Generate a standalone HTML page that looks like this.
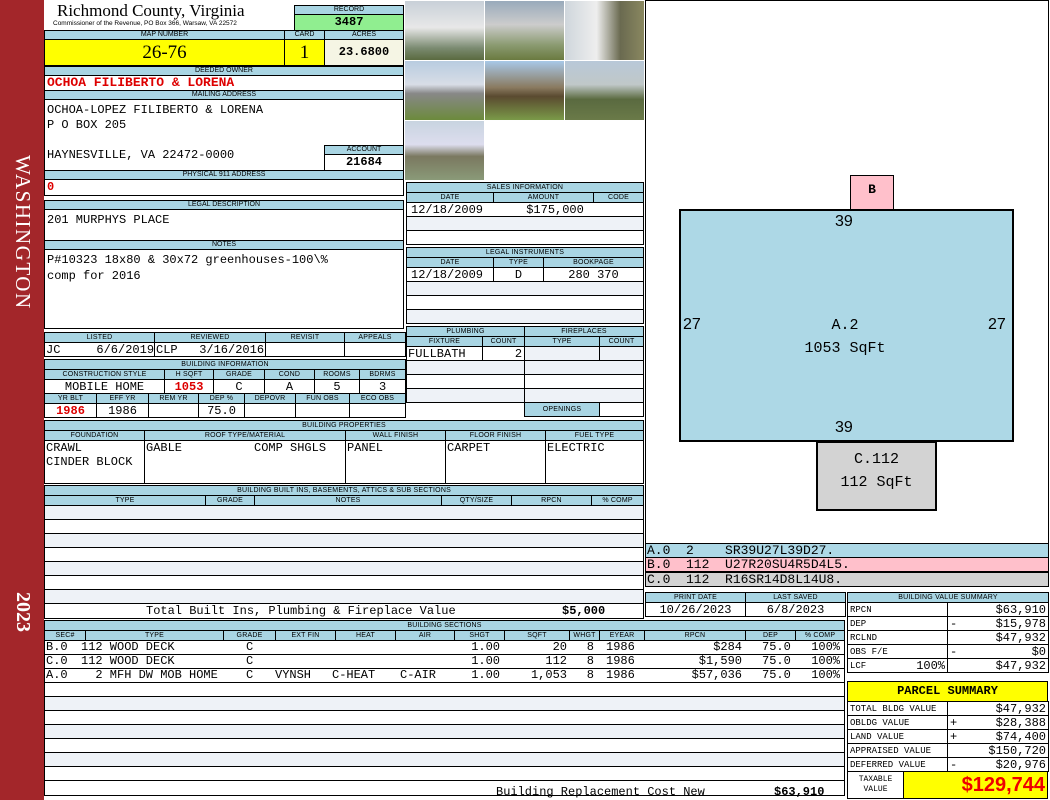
<!DOCTYPE html>
<html><head><meta charset="utf-8">
<style>
*{margin:0;padding:0;box-sizing:border-box}
body{width:1050px;height:800px;background:#fff;position:relative;overflow:hidden;font-family:"Liberation Mono",monospace;font-size:12px;color:#000}
.a{position:absolute;white-space:pre;line-height:13px}
.bx{position:absolute;border:1px solid #000;background:#fff}
table{position:absolute;border-collapse:collapse;table-layout:fixed}
td{border:1px solid #000;white-space:nowrap;overflow:hidden;padding:0 2px;font-size:12px;line-height:12px;height:14px}
td.h,.h{background:#a9d5e3;font-family:"Liberation Sans",sans-serif;font-size:7px;text-align:center;height:10px;line-height:9px;letter-spacing:0.2px;padding:0}
.hb{position:absolute;background:#a9d5e3;border:1px solid #000;font-family:"Liberation Sans",sans-serif;font-size:7px;text-align:center;line-height:8px;height:10px}
.r{color:#d00;font-weight:bold}
.c{text-align:center}.rt{text-align:right}
.g{background:#eef2f7}
.ph{position:absolute;width:79px;height:59px}
</style></head><body>
<div class="a" style="left:0;top:0;width:44px;height:800px;background:#a3262a"></div>
<div class="a" style="left:8px;top:155px;width:30px;height:175px;color:#fff;font-family:'Liberation Serif',serif;font-size:21px;line-height:30px;writing-mode:vertical-rl;letter-spacing:1.5px">WASHINGTON</div>
<div class="a" style="left:10px;top:592px;color:#fff;font-family:'Liberation Serif',serif;font-size:20px;line-height:26px;writing-mode:vertical-rl;font-weight:bold">2023</div>

<div class="a" style="left:57px;top:2px;font-family:'Liberation Serif',serif;font-size:17px;line-height:18px">Richmond County, Virginia</div>
<div class="a" style="left:53px;top:20px;font-family:'Liberation Sans',sans-serif;font-size:6.5px;line-height:8px">Commissioner of the Revenue, PO Box 366, Warsaw, VA 22572</div>
<div class="hb" style="left:294px;top:5px;width:110px">RECORD</div>
<div class="bx" style="left:294px;top:14px;width:110px;height:17px;background:#90ee90;text-align:center;font-weight:bold;font-size:12px;line-height:15px">3487</div>

<div class="hb" style="left:44px;top:30px;width:241px">MAP NUMBER</div>
<div class="hb" style="left:284px;top:30px;width:41px">CARD</div>
<div class="hb" style="left:324px;top:30px;width:80px">ACRES</div>
<div class="bx" style="left:44px;top:39px;width:241px;height:27px;background:#ffff00;font-family:'Liberation Serif',serif;font-size:19px;text-align:center;line-height:25px">26-76</div>
<div class="bx" style="left:284px;top:39px;width:41px;height:27px;background:#ffff00;font-family:'Liberation Serif',serif;font-size:19px;text-align:center;line-height:25px">1</div>
<div class="bx" style="left:324px;top:39px;width:80px;height:27px;background:#f5f5e4;font-weight:bold;font-size:12px;text-align:center;line-height:25px">23.6800</div>

<div class="hb" style="left:44px;top:66px;width:360px">DEEDED OWNER</div>
<div class="bx" style="left:44px;top:75px;width:360px;height:16px;padding-left:2px;line-height:14px"><span class="r" style="font-size:13px">OCHOA FILIBERTO &amp; LORENA</span></div>
<div class="hb" style="left:44px;top:90px;width:360px">MAILING ADDRESS</div>
<div class="bx" style="left:44px;top:99px;width:360px;height:72px;padding:3px 2px;line-height:15px">OCHOA-LOPEZ FILIBERTO &amp; LORENA<br>P O BOX 205<br><br>HAYNESVILLE, VA 22472-0000</div>
<div class="hb" style="left:324px;top:145px;width:80px">ACCOUNT</div>
<div class="bx" style="left:324px;top:154px;width:80px;height:17px;font-weight:bold;font-size:12px;text-align:center;line-height:15px">21684</div>
<div class="hb" style="left:44px;top:170px;width:360px">PHYSICAL 911 ADDRESS</div>
<div class="bx" style="left:44px;top:179px;width:360px;height:17px;padding-left:2px;line-height:15px"><span class="r">0</span></div>

<div class="hb" style="left:44px;top:200px;width:360px">LEGAL DESCRIPTION</div>
<div class="bx" style="left:44px;top:209px;width:360px;height:32px;padding:3px 2px;line-height:14px">201 MURPHYS PLACE</div>
<div class="hb" style="left:44px;top:240px;width:360px">NOTES</div>
<div class="bx" style="left:44px;top:249px;width:360px;height:80px;padding:2px 2px;line-height:16px">P#10323 18x80 &amp; 30x72 greenhouses-100\%<br>comp for 2016</div>

<table style="left:44px;top:332px;width:361px">
<col style="width:110px"><col style="width:111px"><col style="width:79px"><col style="width:61px">
<tr><td class="h">LISTED</td><td class="h">REVIEWED</td><td class="h">REVISIT</td><td class="h">APPEALS</td></tr>
<tr><td style="padding:0 1px">JC&nbsp;&nbsp;&nbsp;&nbsp;&nbsp;6/6/2019</td><td style="padding:0 1px">CLP&nbsp;&nbsp;&nbsp;3/16/2016</td><td></td><td></td></tr></table>

<table style="left:44px;top:359px;width:361px">
<col style="width:120px"><col style="width:49px"><col style="width:51px"><col style="width:50px"><col style="width:45px"><col style="width:46px">
<tr><td class="h" colspan="6">BUILDING INFORMATION</td></tr>
<tr><td class="h">CONSTRUCTION STYLE</td><td class="h">H SQFT</td><td class="h">GRADE</td><td class="h">COND</td><td class="h">ROOMS</td><td class="h">BDRMS</td></tr>
<tr><td class="c">MOBILE HOME</td><td class="c r">1053</td><td class="c">C</td><td class="c">A</td><td class="c">5</td><td class="c">3</td></tr></table>
<table style="left:44px;top:393px;width:361px">
<col style="width:52px"><col style="width:52px"><col style="width:50px"><col style="width:46px"><col style="width:51px"><col style="width:54px"><col style="width:56px">
<tr><td class="h">YR BLT</td><td class="h">EFF YR</td><td class="h">REM YR</td><td class="h">DEP %</td><td class="h">DEPOVR</td><td class="h">FUN OBS</td><td class="h">ECO OBS</td></tr>
<tr><td class="c r">1986</td><td class="c">1986</td><td></td><td class="c">75.0</td><td></td><td></td><td></td></tr></table>

<!-- photos -->
<div class="ph" style="left:405px;top:1px;background:linear-gradient(#c8d0d8 0,#e8e8e8 45%,#7a8a70 80%,#5a6a40)"></div>
<div class="ph" style="left:485px;top:1px;background:linear-gradient(#9ab 0,#ccc 40%,#8a9a70 75%,#6a7a40)"></div>
<div class="ph" style="left:565px;top:1px;background:linear-gradient(90deg,#cfd6dc,#eee 40%,#6a6a50 70%,#8a8860)"></div>
<div class="ph" style="left:405px;top:61px;background:linear-gradient(#b8cce0 0,#d8dde6 40%,#888 55%,#6c8a3c)"></div>
<div class="ph" style="left:485px;top:61px;background:linear-gradient(#a8c8e8 0,#8a7a60 45%,#5a4a30 60%,#7a9a48)"></div>
<div class="ph" style="left:565px;top:61px;background:linear-gradient(#b8c8d8 0,#c0c8c8 40%,#5a6a40 65%,#6a7a48)"></div>
<div class="ph" style="left:405px;top:121px;background:linear-gradient(#c8d4e0 0,#dde 40%,#7a7860 60%,#8a9a78)"></div>

<!-- sales -->
<table style="left:406px;top:182px;width:237px">
<col style="width:87px"><col style="width:100px"><col style="width:50px">
<tr><td class="h" colspan="3">SALES INFORMATION</td></tr>
<tr><td class="h">DATE</td><td class="h">AMOUNT</td><td class="h">CODE</td></tr>
<tr><td colspan="3" style="padding-left:4px">12/18/2009&nbsp;&nbsp;&nbsp;&nbsp;&nbsp;&nbsp;$175,000</td></tr>
<tr><td colspan="3" class="g"></td></tr><tr><td colspan="3"></td></tr></table>
<table style="left:406px;top:247px;width:237px">
<col style="width:87px"><col style="width:50px"><col style="width:100px">
<tr><td class="h" colspan="3">LEGAL INSTRUMENTS</td></tr>
<tr><td class="h">DATE</td><td class="h">TYPE</td><td class="h">BOOKPAGE</td></tr>
<tr><td style="padding-left:4px">12/18/2009</td><td class="c">D</td><td class="c">280 370</td></tr>
<tr><td colspan="3" class="g"></td></tr><tr><td colspan="3"></td></tr><tr><td colspan="3" class="g"></td></tr></table>

<table style="left:406px;top:326px;width:237px">
<col style="width:76px"><col style="width:42px"><col style="width:75px"><col style="width:44px">
<tr><td class="h" colspan="2">PLUMBING</td><td class="h" colspan="2">FIREPLACES</td></tr>
<tr><td class="h">FIXTURE</td><td class="h">COUNT</td><td class="h">TYPE</td><td class="h">COUNT</td></tr>
<tr><td style="padding:0 1px">FULLBATH</td><td class="rt">2</td><td class="g"></td><td class="g"></td></tr>
<tr><td class="g" colspan="2"></td><td class="g" colspan="2"></td></tr>
<tr><td colspan="2"></td><td colspan="2"></td></tr>
<tr><td class="g" colspan="2"></td><td class="g" colspan="2"></td></tr>
<tr><td colspan="2" style="border:none;border-right:1px solid #000"></td><td class="h" style="height:14px">OPENINGS</td><td></td></tr></table>

<!-- building properties -->
<table style="left:44px;top:420px;width:599px">
<col style="width:100px"><col style="width:201px"><col style="width:100px"><col style="width:100px"><col style="width:98px">
<tr><td class="h" colspan="5">BUILDING PROPERTIES</td></tr>
<tr><td class="h">FOUNDATION</td><td class="h">ROOF TYPE/MATERIAL</td><td class="h">WALL FINISH</td><td class="h">FLOOR FINISH</td><td class="h">FUEL TYPE</td></tr>
<tr><td style="height:43px;vertical-align:top;line-height:14px;padding:0 1px">CRAWL<br>CINDER BLOCK</td><td style="vertical-align:top;padding:0 1px;line-height:14px">GABLE&nbsp;&nbsp;&nbsp;&nbsp;&nbsp;&nbsp;&nbsp;&nbsp;&nbsp;&nbsp;COMP SHGLS</td><td style="vertical-align:top;padding:0 1px;line-height:14px">PANEL</td><td style="vertical-align:top;padding:0 1px;line-height:14px">CARPET</td><td style="vertical-align:top;padding:0 1px;line-height:14px">ELECTRIC</td></tr></table>

<table style="left:44px;top:485px;width:599px">
<col style="width:161px"><col style="width:49px"><col style="width:187px"><col style="width:70px"><col style="width:80px"><col style="width:52px">
<tr><td class="h" colspan="6">BUILDING BUILT INS, BASEMENTS, ATTICS &amp; SUB SECTIONS</td></tr>
<tr><td class="h">TYPE</td><td class="h">GRADE</td><td class="h">NOTES</td><td class="h">QTY/SIZE</td><td class="h">RPCN</td><td class="h">% COMP</td></tr>
<tr><td colspan="6" class="g"></td></tr><tr><td colspan="6"></td></tr><tr><td colspan="6" class="g"></td></tr><tr><td colspan="6"></td></tr><tr><td colspan="6" class="g"></td></tr><tr><td colspan="6"></td></tr><tr><td colspan="6" class="g"></td></tr>
<tr><td colspan="6" style="height:15px"></td></tr></table>
<div class="a" style="left:146px;top:605px">Total Built Ins, Plumbing &amp; Fireplace Value</div>
<div class="a" style="left:562px;top:605px;font-weight:bold">$5,000</div>

<!-- building sections -->
<table style="left:44px;top:620px;width:800px">
<col style="width:41px"><col style="width:138px"><col style="width:52px"><col style="width:60px"><col style="width:60px"><col style="width:59px"><col style="width:50px"><col style="width:65px"><col style="width:30px"><col style="width:45px"><col style="width:101px"><col style="width:50px"><col style="width:49px">
<tr><td class="h" colspan="13">BUILDING SECTIONS</td></tr>
<tr><td class="h">SEC#</td><td class="h">TYPE</td><td class="h">GRADE</td><td class="h">EXT FIN</td><td class="h">HEAT</td><td class="h">AIR</td><td class="h">SHGT</td><td class="h">SQFT</td><td class="h">WHGT</td><td class="h">EYEAR</td><td class="h">RPCN</td><td class="h">DEP</td><td class="h">% COMP</td></tr>
<tr><td colspan="13"></td></tr><tr><td colspan="13"></td></tr><tr><td colspan="13"></td></tr>
<tr><td colspan="13"></td></tr><tr><td colspan="13" class="g"></td></tr><tr><td colspan="13"></td></tr><tr><td colspan="13" class="g"></td></tr><tr><td colspan="13"></td></tr><tr><td colspan="13" class="g"></td></tr><tr><td colspan="13"></td></tr>
<tr><td colspan="13" style="height:15px"></td></tr></table>

<div class="a" style="left:46px;top:641px">B.0</div><div class="a" style="left:81px;top:641px">112 WOOD DECK</div><div class="a" style="left:246px;top:641px">C</div>
<div class="a" style="right:550px;top:641px">1.00</div><div class="a" style="right:483px;top:641px">20</div><div class="a" style="right:456px;top:641px">8</div><div class="a" style="left:606px;top:641px">1986</div>
<div class="a" style="right:308px;top:641px">$284</div><div class="a" style="left:762px;top:641px">75.0</div><div class="a" style="right:210px;top:641px">100%</div>

<div class="a" style="left:46px;top:655px">C.0</div><div class="a" style="left:81px;top:655px">112 WOOD DECK</div><div class="a" style="left:246px;top:655px">C</div>
<div class="a" style="right:550px;top:655px">1.00</div><div class="a" style="right:483px;top:655px">112</div><div class="a" style="right:456px;top:655px">8</div><div class="a" style="left:606px;top:655px">1986</div>
<div class="a" style="right:308px;top:655px">$1,590</div><div class="a" style="left:762px;top:655px">75.0</div><div class="a" style="right:210px;top:655px">100%</div>

<div class="a" style="left:46px;top:669px">A.0</div><div class="a" style="left:81px;top:669px">  2 MFH DW MOB HOME</div><div class="a" style="left:246px;top:669px">C</div>
<div class="a" style="left:275px;top:669px">VYNSH</div><div class="a" style="left:332px;top:669px">C-HEAT</div><div class="a" style="left:400px;top:669px">C-AIR</div>
<div class="a" style="right:550px;top:669px">1.00</div><div class="a" style="right:483px;top:669px">1,053</div><div class="a" style="right:456px;top:669px">8</div><div class="a" style="left:606px;top:669px">1986</div>
<div class="a" style="right:308px;top:669px">$57,036</div><div class="a" style="left:762px;top:669px">75.0</div><div class="a" style="right:210px;top:669px">100%</div>

<div class="a" style="left:496px;top:786px">Building Replacement Cost New</div>
<div class="a" style="left:774px;top:786px;font-weight:bold">$63,910</div>

<!-- sketch -->
<div class="bx" style="left:645px;top:0;width:404px;height:544px"></div>
<div class="bx" style="left:850px;top:175px;width:44px;height:35px;background:#ffc0cb;text-align:center;line-height:28px;font-weight:bold;font-size:13px">B</div>
<div class="bx" style="left:679px;top:209px;width:335px;height:233px;background:#add8e6;border-width:2px"></div>
<div class="bx" style="left:816px;top:441px;width:121px;height:70px;background:#d3d3d3;border-width:2px;text-align:center;font-size:15px;line-height:23px;padding-top:5px">C.112<br>112 SqFt</div>
<div class="a" style="left:835px;top:213px;font-family:'Liberation Sans',sans-serif;font-size:16px;line-height:18px">39</div>
<div class="a" style="left:835px;top:419px;font-family:'Liberation Sans',sans-serif;font-size:16px;line-height:18px">39</div>
<div class="a" style="left:683px;top:316px;font-family:'Liberation Sans',sans-serif;font-size:16px;line-height:18px">27</div>
<div class="a" style="left:988px;top:316px;font-family:'Liberation Sans',sans-serif;font-size:16px;line-height:18px">27</div>
<div class="a" style="left:760px;top:314px;width:170px;text-align:center;font-size:15px;line-height:23px">A.2<br>1053 SqFt</div>

<div class="a" style="left:645px;top:543px;width:404px;height:15px;background:#add8e6;border:1px solid #000;font-size:13px;line-height:13px;padding-left:1px">A.0  2    SR39U27L39D27.</div>
<div class="a" style="left:645px;top:557px;width:404px;height:15px;background:#ffc0cb;border:1px solid #000;font-size:13px;line-height:13px;padding-left:1px">B.0  112  U27R20SU4R5D4L5.</div>
<div class="a" style="left:645px;top:572px;width:404px;height:15px;background:#d3d3d3;border:1px solid #000;font-size:13px;line-height:13px;padding-left:1px">C.0  112  R16SR14D8L14U8.</div>

<table style="left:645px;top:592px;width:200px">
<col style="width:100px"><col style="width:100px">
<tr><td class="h">PRINT DATE</td><td class="h">LAST SAVED</td></tr>
<tr><td class="c">10/26/2023</td><td class="c">6/8/2023</td></tr></table>

<table style="left:847px;top:592px;width:201px">
<col style="width:100px"><col style="width:101px">
<tr><td class="h" colspan="2">BUILDING VALUE SUMMARY</td></tr>
<tr><td style="font-size:9px">RPCN</td><td class="rt">$63,910</td></tr>
<tr><td style="font-size:9px">DEP</td><td class="rt"><span style="float:left">-</span>$15,978</td></tr>
<tr><td style="font-size:9px">RCLND</td><td class="rt">$47,932</td></tr>
<tr><td style="font-size:9px">OBS F/E</td><td class="rt"><span style="float:left">-</span>$0</td></tr>
<tr><td style="font-size:9px">LCF<span style="float:right;font-size:12px">100%</span></td><td class="rt">$47,932</td></tr></table>

<div class="bx" style="left:847px;top:681px;width:201px;height:21px;background:#ffff00;text-align:center;font-family:'Liberation Mono',monospace;font-weight:bold;font-size:12px;line-height:19px">PARCEL SUMMARY</div>
<table style="left:847px;top:701px;width:201px">
<col style="width:100px"><col style="width:101px">
<tr><td style="font-size:9px">TOTAL BLDG VALUE</td><td class="rt">$47,932</td></tr>
<tr><td style="font-size:9px">OBLDG VALUE</td><td class="rt"><span style="float:left">+</span>$28,388</td></tr>
<tr><td style="font-size:9px">LAND VALUE</td><td class="rt"><span style="float:left">+</span>$74,400</td></tr>
<tr><td style="font-size:9px">APPRAISED VALUE</td><td class="rt">$150,720</td></tr>
<tr><td style="font-size:9px">DEFERRED VALUE</td><td class="rt"><span style="float:left">-</span>$20,976</td></tr></table>
<div class="bx" style="left:847px;top:771px;width:57px;height:28px;font-size:8px;text-align:center;line-height:10px;padding-top:3px">TAXABLE<br>VALUE</div>
<div class="bx" style="left:903px;top:771px;width:145px;height:28px;background:#ffff00;color:#e00;font-family:'Liberation Sans',sans-serif;font-weight:bold;font-size:20px;text-align:right;line-height:26px;padding-right:2px">$129,744</div>
</body></html>
